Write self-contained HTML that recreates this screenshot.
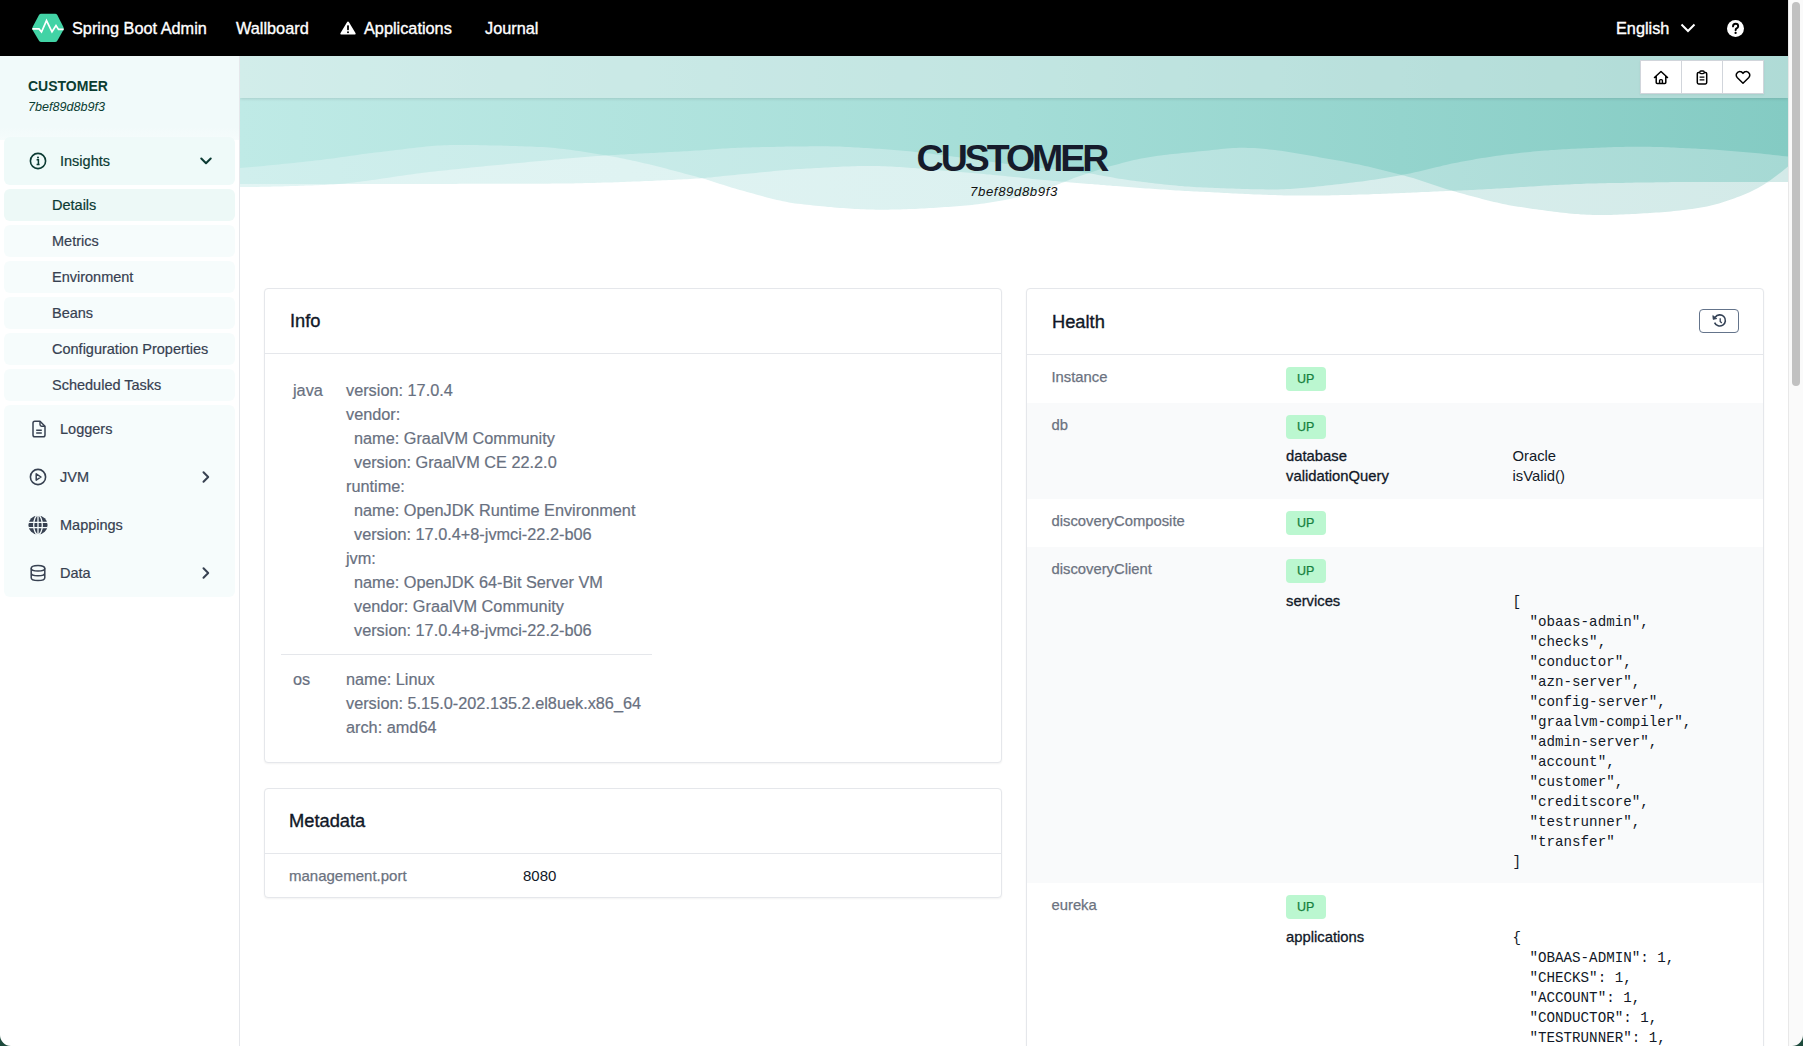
<!DOCTYPE html>
<html><head><meta charset="utf-8">
<style>
*{box-sizing:border-box;margin:0;padding:0}
html,body{width:1803px;height:1046px;overflow:hidden;background:#fff;font-family:"Liberation Sans",sans-serif;color:#111827}
.abs{position:absolute}
#nav{position:absolute;left:0;top:0;width:1788px;height:56px;background:#000;color:#fff}
#nav .t{position:absolute;top:0;line-height:56px;font-size:16.3px;white-space:nowrap;-webkit-text-stroke:0.35px #fff}
#side{position:absolute;left:0;top:56px;width:240px;height:990px;background:#fff;border-right:1px solid #e5e7eb}
#sidehead{position:absolute;left:0;top:0;width:239px;height:84px;background:linear-gradient(#f1fafa 85%,#f6fcfc)}
.sn{position:absolute;left:4px;width:231px;border-radius:6px;background:#f3fbfa;color:#374151;font-size:14.5px;white-space:nowrap}
#main{position:absolute;left:240px;top:56px;width:1548px;height:990px;overflow:hidden}
.card{position:absolute;background:#fff;border:1px solid #e5e7eb;border-radius:4px;box-shadow:0 1px 2px rgba(0,0,0,.05)}
.card h2{position:absolute;left:24px;font-size:18.5px;font-weight:normal;color:#111827;white-space:nowrap}
.hr{position:absolute;left:0;right:0;height:1px;background:#e5e7eb}
.tx{position:absolute;white-space:nowrap}
.g{color:#4b5563}
.mono{font-family:"Liberation Mono",monospace}
.badge{position:absolute;width:40px;height:24px;border-radius:4px;background:#bbf7d0;color:#15803d;font-size:12.5px;line-height:24px;text-align:center}
#scroll{position:absolute;left:1788px;top:0;width:15px;height:1046px;background:#fafafa;border-left:1px solid #e8e8e8}
#thumb{position:absolute;left:1792px;top:2px;width:8px;height:384px;border-radius:4px;background:#c1c1c1}
</style></head><body>

<div id="nav">
  <svg class="abs" style="left:32px;top:13px" width="32" height="30" viewBox="0 0 32 30">
    <path d="M9.2,0.8 H23.1 Q24.5,0.8 25.3,2 L31.4,14.1 Q32,15.5 31.4,16.9 L25.3,27.8 Q24.5,29 23.1,29 H9.2 Q7.8,29 7,27.8 L0.6,16.9 Q0,15.5 0.6,14.1 L7,2 Q7.8,0.8 9.2,0.8 Z" fill="#42d3a5"/>
    <polyline points="0.3,15.9 7,15.9 9.5,19 14.5,7.6 20,18.8 24,12.6 26.5,16.4 31.7,16.4" fill="none" stroke="#fff" stroke-width="1.7" stroke-linejoin="miter" stroke-miterlimit="3"/>
  </svg>
  <div class="t" style="left:72px">Spring Boot Admin</div>
  <div class="t" style="left:236px">Wallboard</div>
  <svg class="abs" style="left:340px;top:21px" width="16" height="14" viewBox="0 0 16 14"><path d="M8,0.5 Q8.6,0.5 9,1.2 L15.6,12.3 Q16,13.5 14.8,13.5 H1.2 Q0,13.5 0.4,12.3 L7,1.2 Q7.4,0.5 8,0.5 Z" fill="#fff"/><rect x="7.1" y="4.2" width="1.8" height="5" rx="0.6" fill="#000"/><circle cx="8" cy="11.2" r="1" fill="#000"/></svg>
  <div class="t" style="left:364px">Applications</div>
  <div class="t" style="left:485px">Journal</div>
  <div class="t" style="left:1616px">English</div>
  <svg class="abs" style="left:1680px;top:23px" width="16" height="10" viewBox="0 0 16 10"><polyline points="1.5,1.5 8,8 14.5,1.5" fill="none" stroke="#fff" stroke-width="2"/></svg>
  <svg class="abs" style="left:1727px;top:19.5px" width="17" height="17" viewBox="0 0 17 17"><circle cx="8.5" cy="8.5" r="8.5" fill="#fff"/><path d="M6,6.4 Q6,3.8 8.6,3.8 Q11.2,3.8 11.2,6.2 Q11.2,7.6 9.6,8.4 Q8.6,9 8.6,10.2" fill="none" stroke="#000" stroke-width="1.9" stroke-linecap="round"/><circle cx="8.6" cy="12.9" r="1.15" fill="#000"/></svg>
</div>

<div id="side">
  <div id="sidehead"></div>
  <div class="tx" style="left:28px;top:22px;font-size:14px;font-weight:bold;color:#0b3d32">CUSTOMER</div>
  <div class="tx" style="left:28px;top:44px;font-size:12.6px;font-style:italic;color:#0b3d32">7bef89d8b9f3</div>
  <div class="sn" style="top:81px;height:48px;background:#effaf9"></div>
  <svg class="abs" style="left:29px;top:96px" width="18" height="18" viewBox="0 0 18 18"><circle cx="9" cy="9" r="7.6" fill="none" stroke="#0b3a33" stroke-width="1.6"/><circle cx="9" cy="5.4" r="1" fill="#0b3a33"/><path d="M7.6,7.8 H9.4 V12.6 M7.6,12.6 H10.6" fill="none" stroke="#0b3a33" stroke-width="1.5"/></svg>
  <div class="tx" style="left:60px;top:96px;font-size:14.5px;line-height:18px;color:#0b3a33;-webkit-text-stroke:0.2px #0b3a33">Insights</div>
  <svg class="abs" style="left:200px;top:101px" width="12" height="8" viewBox="0 0 12 8"><polyline points="1.3,1.5 6,6.2 10.7,1.5" fill="none" stroke="#0b3a33" stroke-width="2" stroke-linecap="round" stroke-linejoin="round"/></svg>
  <div class="sn" style="top:133px;height:32px;background:#edf9f7"></div>
  <div class="tx" style="left:52px;top:140px;font-size:14.5px;line-height:18px;color:#0b3a33;-webkit-text-stroke:0.2px #0b3a33">Details</div>
  <div class="sn" style="top:169px;height:32px;background:#f6fcfc"></div>
  <div class="tx" style="left:52px;top:176px;font-size:14.5px;line-height:18px;color:#374151;-webkit-text-stroke:0.2px #374151">Metrics</div>
  <div class="sn" style="top:205px;height:32px;background:#f6fcfc"></div>
  <div class="tx" style="left:52px;top:212px;font-size:14.5px;line-height:18px;color:#374151;-webkit-text-stroke:0.2px #374151">Environment</div>
  <div class="sn" style="top:241px;height:32px;background:#f6fcfc"></div>
  <div class="tx" style="left:52px;top:248px;font-size:14.5px;line-height:18px;color:#374151;-webkit-text-stroke:0.2px #374151">Beans</div>
  <div class="sn" style="top:277px;height:32px;background:#f6fcfc"></div>
  <div class="tx" style="left:52px;top:284px;font-size:14.5px;line-height:18px;color:#374151;-webkit-text-stroke:0.2px #374151">Configuration Properties</div>
  <div class="sn" style="top:313px;height:32px;background:#f6fcfc"></div>
  <div class="tx" style="left:52px;top:320px;font-size:14.5px;line-height:18px;color:#374151;-webkit-text-stroke:0.2px #374151">Scheduled Tasks</div>
  <div class="sn" style="top:349px;height:192px;background:#f6fcfc"></div>
  <svg class="abs" style="left:30px;top:364px" width="18" height="18" viewBox="0 0 18 18"><path d="M3,3 Q3,1.2 4.8,1.2 H10 L15,6.2 V15 Q15,16.8 13.2,16.8 H4.8 Q3,16.8 3,15 Z" fill="none" stroke="#374151" stroke-width="1.5" stroke-linejoin="round"/><path d="M10,1.2 V4.6 Q10,6.2 11.6,6.2 H15" fill="none" stroke="#374151" stroke-width="1.4"/><path d="M6.2,10.2 H11.8 M6.2,13 H11.8" stroke="#374151" stroke-width="1.5"/></svg>
  <div class="tx" style="left:60px;top:364px;font-size:14.5px;line-height:18px;color:#374151;-webkit-text-stroke:0.2px #374151">Loggers</div>
  <svg class="abs" style="left:29px;top:412px" width="18" height="18" viewBox="0 0 18 18"><circle cx="9" cy="9" r="7.6" fill="none" stroke="#374151" stroke-width="1.6"/><path d="M7.2,5.8 L12,9 L7.2,12.2 Z" fill="none" stroke="#374151" stroke-width="1.5" stroke-linejoin="round"/></svg>
  <div class="tx" style="left:60px;top:412px;font-size:14.5px;line-height:18px;color:#374151;-webkit-text-stroke:0.2px #374151">JVM</div>
  <svg class="abs" style="left:200px;top:414px" width="12" height="14" viewBox="0 0 12 14"><polyline points="3.5,2.3 8.2,7 3.5,11.7" fill="none" stroke="#374151" stroke-width="2" stroke-linecap="round" stroke-linejoin="round"/></svg>
  <svg class="abs" style="left:28px;top:459px" width="20" height="20" viewBox="0 0 20 20"><circle cx="10" cy="10" r="9.6" fill="#374151"/><path d="M0.5,7.4 H19.5 M0.5,12.6 H19.5" stroke="#f6fcfc" stroke-width="1.3"/><path d="M10,0.4 V19.6" stroke="#f6fcfc" stroke-width="1.3"/><ellipse cx="10" cy="10" rx="4.3" ry="9.6" fill="none" stroke="#f6fcfc" stroke-width="1.3"/></svg>
  <div class="tx" style="left:60px;top:460px;font-size:14.5px;line-height:18px;color:#374151;-webkit-text-stroke:0.2px #374151">Mappings</div>
  <svg class="abs" style="left:29px;top:508px" width="18" height="18" viewBox="0 0 18 18"><ellipse cx="9" cy="4.2" rx="6.8" ry="2.8" fill="none" stroke="#374151" stroke-width="1.5"/><path d="M2.2,4.2 V13.8 Q2.2,16.6 9,16.6 Q15.8,16.6 15.8,13.8 V4.2 M2.2,9 Q2.2,11.8 9,11.8 Q15.8,11.8 15.8,9" fill="none" stroke="#374151" stroke-width="1.5"/></svg>
  <div class="tx" style="left:60px;top:508px;font-size:14.5px;line-height:18px;color:#374151;-webkit-text-stroke:0.2px #374151">Data</div>
  <svg class="abs" style="left:200px;top:510px" width="12" height="14" viewBox="0 0 12 14"><polyline points="3.5,2.3 8.2,7 3.5,11.7" fill="none" stroke="#374151" stroke-width="2" stroke-linecap="round" stroke-linejoin="round"/></svg>

</div>

<div id="main">
  <svg width="1548" height="184" viewBox="0 0 1548 184" style="position:absolute;left:0;top:0;display:block">
<defs>
<linearGradient id="gbg" x1="0" x2="1548" y1="0" y2="0" gradientUnits="userSpaceOnUse"><stop offset="0" stop-color="#bfeae6"/><stop offset="0.5" stop-color="#a4ddd7"/><stop offset="1" stop-color="#84cbc3"/></linearGradient>
<linearGradient id="gmd" x1="0" x2="1548" y1="0" y2="0" gradientUnits="userSpaceOnUse"><stop offset="0" stop-color="#d0efed"/><stop offset="0.5" stop-color="#c0e7e4"/><stop offset="1" stop-color="#a6d9d4"/></linearGradient>
<linearGradient id="glt" x1="0" x2="1548" y1="0" y2="0" gradientUnits="userSpaceOnUse"><stop offset="0" stop-color="#e2f5f4"/><stop offset="0.5" stop-color="#dcf1f0"/><stop offset="1" stop-color="#d3eae8"/></linearGradient>
</defs>
<path d="M0,0 H1548 V126 H0 Z" fill="url(#gbg)"/>
<path d="M0,184 L0,112.0 3,111.8 6,111.5 9,111.2 12,111.0 15,110.7 18,110.5 21,110.2 24,109.9 27,109.6 30,109.3 33,109.0 36,108.7 39,108.4 42,108.1 45,107.8 48,107.5 51,107.2 54,106.9 57,106.6 60,106.2 63,105.9 66,105.6 69,105.2 72,104.9 75,104.6 78,104.2 81,103.9 84,103.5 87,103.1 90,102.8 93,102.4 96,101.9 99,101.5 102,101.1 105,100.7 108,100.2 111,99.8 114,99.4 117,99.0 120,98.5 123,98.1 126,97.7 129,97.3 132,96.9 135,96.6 138,96.2 141,95.9 144,95.5 147,95.2 150,94.8 153,94.5 156,94.1 159,93.7 162,93.4 165,93.0 168,92.6 171,92.3 174,91.9 177,91.6 180,91.2 183,90.9 186,90.6 189,90.3 192,90.1 195,89.8 198,89.6 201,89.4 204,89.3 207,89.2 210,89.1 213,89.0 216,89.0 219,89.0 222,89.0 225,89.0 228,89.1 231,89.1 234,89.1 237,89.1 240,89.2 243,89.2 246,89.3 249,89.4 252,89.4 255,89.5 258,89.6 261,89.6 264,89.7 267,89.8 270,89.9 273,90.0 276,90.1 279,90.2 282,90.3 285,90.4 288,90.5 291,90.6 294,90.8 297,90.9 300,91.0 303,91.1 306,91.3 309,91.5 312,91.8 315,92.1 318,92.4 321,92.7 324,93.0 327,93.4 330,93.8 333,94.2 336,94.7 339,95.1 342,95.6 345,96.1 348,96.5 351,97.0 354,97.5 357,98.0 360,98.5 363,99.0 366,99.5 369,99.3 372,99.1 375,98.9 378,98.8 381,98.6 384,98.4 387,98.3 390,98.1 393,97.9 396,97.8 399,97.6 402,97.5 405,97.3 408,97.2 411,97.0 414,96.9 417,96.7 420,96.6 423,96.5 426,96.3 429,96.1 432,96.0 435,95.8 438,95.7 441,95.5 444,95.3 447,95.2 450,95.0 453,94.8 456,94.6 459,94.4 462,94.2 465,93.9 468,93.7 471,93.5 474,93.2 477,93.0 480,92.8 483,92.6 486,92.4 489,92.2 492,92.0 495,91.9 498,91.8 501,91.7 504,91.6 507,91.5 510,91.4 513,91.3 516,91.3 519,91.2 522,91.1 525,91.1 528,91.0 531,90.9 534,90.9 537,90.8 540,90.7 543,90.7 546,90.6 549,90.6 552,90.5 555,90.5 558,90.5 561,90.4 564,90.4 567,90.4 570,90.3 573,90.3 576,90.3 579,90.3 582,90.3 585,90.3 588,90.3 591,90.4 594,90.4 597,90.5 600,90.6 603,90.8 606,90.9 609,91.0 612,91.2 615,91.4 618,91.5 621,91.7 624,91.9 627,92.1 630,92.3 633,92.5 636,92.7 639,92.8 642,93.0 645,93.2 648,93.4 651,93.7 654,93.9 657,94.2 660,94.4 663,94.7 666,95.0 669,95.3 672,95.6 675,95.9 678,96.2 681,96.6 684,96.9 687,97.3 690,97.6 693,98.0 696,98.4 699,98.8 702,99.1 705,99.5 708,99.9 711,100.3 714,100.7 717,101.1 720,101.5 723,102.0 726,102.4 729,102.8 732,103.2 735,103.6 738,104.0 741,104.5 744,104.9 747,105.3 750,105.7 753,106.1 756,106.5 759,106.9 762,107.3 765,107.7 768,108.1 771,108.5 774,108.9 777,109.3 780,109.7 783,110.0 786,110.4 789,110.8 792,111.1 795,111.5 798,111.8 801,112.1 804,112.4 807,112.7 810,113.0 813,113.3 816,113.5 819,113.8 822,114.1 825,114.4 828,114.7 831,115.0 834,115.3 837,115.6 840,116.0 843,116.4 846,116.8 849,116.9 852,115.9 855,114.9 858,113.9 861,113.0 864,112.0 867,111.1 870,110.3 873,109.5 876,108.7 879,107.9 882,107.1 885,106.3 888,105.5 891,104.8 894,104.1 897,103.4 900,102.8 903,102.2 906,101.7 909,101.2 912,100.7 915,100.3 918,99.8 921,99.4 924,99.1 927,98.7 930,98.3 933,98.0 936,97.7 939,97.4 942,97.0 945,96.7 948,96.5 951,96.2 954,95.9 957,95.6 960,95.3 963,95.0 966,94.7 969,94.4 972,94.0 975,93.7 978,93.4 981,93.0 984,92.8 987,92.5 990,92.3 993,92.1 996,91.9 999,91.8 1002,91.8 1005,91.8 1008,91.9 1011,92.0 1014,92.1 1017,92.3 1020,92.5 1023,92.8 1026,93.0 1029,93.4 1032,93.7 1035,94.1 1038,94.4 1041,94.8 1044,95.3 1047,95.7 1050,96.2 1053,96.7 1056,97.2 1059,97.7 1062,98.2 1065,98.7 1068,99.2 1071,99.8 1074,100.3 1077,100.8 1080,101.4 1083,101.9 1086,102.4 1089,103.0 1092,103.5 1095,104.0 1098,104.5 1101,105.0 1104,105.6 1107,106.2 1110,106.8 1113,107.4 1116,108.0 1119,108.6 1122,109.3 1125,109.9 1128,110.6 1131,111.3 1134,112.0 1137,112.7 1140,113.4 1143,114.2 1146,114.9 1149,115.7 1152,116.4 1155,117.2 1158,118.0 1161,118.7 1164,118.6 1167,118.0 1170,117.4 1173,116.8 1176,116.1 1179,115.4 1182,114.7 1185,114.0 1188,113.3 1191,112.5 1194,111.8 1197,111.1 1200,110.4 1203,109.6 1206,108.9 1209,108.3 1212,107.6 1215,107.0 1218,106.4 1221,105.8 1224,105.3 1227,104.7 1230,104.2 1233,103.7 1236,103.1 1239,102.6 1242,102.1 1245,101.7 1248,101.2 1251,100.7 1254,100.3 1257,99.8 1260,99.4 1263,99.0 1266,98.6 1269,98.3 1272,97.9 1275,97.5 1278,97.2 1281,96.8 1284,96.5 1287,96.2 1290,95.9 1293,95.6 1296,95.3 1299,95.1 1302,94.8 1305,94.6 1308,94.4 1311,94.1 1314,93.9 1317,93.7 1320,93.5 1323,93.3 1326,93.2 1329,93.0 1332,92.8 1335,92.7 1338,92.6 1341,92.4 1344,92.3 1347,92.2 1350,92.0 1353,91.9 1356,91.8 1359,91.7 1362,91.5 1365,91.4 1368,91.3 1371,91.2 1374,91.1 1377,91.0 1380,91.0 1383,90.9 1386,90.8 1389,90.8 1392,90.7 1395,90.7 1398,90.7 1401,90.7 1404,90.7 1407,90.7 1410,90.8 1413,90.9 1416,90.9 1419,91.0 1422,91.1 1425,91.2 1428,91.3 1431,91.5 1434,91.6 1437,91.7 1440,91.9 1443,92.0 1446,92.2 1449,92.3 1452,92.5 1455,92.6 1458,92.8 1461,93.0 1464,93.1 1467,93.3 1470,93.5 1473,93.6 1476,93.8 1479,94.0 1482,94.2 1485,94.5 1488,94.7 1491,94.9 1494,95.2 1497,95.4 1500,95.7 1503,95.9 1506,96.2 1509,96.5 1512,96.7 1515,97.0 1518,97.3 1521,97.6 1524,97.9 1527,98.3 1530,98.6 1533,98.9 1536,99.2 1539,99.6 1542,99.9 1545,100.2 1548,100.6 L1548,184 Z" fill="url(#gmd)"/>
<path d="M0,184 L0,128.0 3,128.0 6,128.0 9,128.0 12,128.0 15,128.0 18,128.0 21,128.0 24,128.0 27,128.0 30,128.0 33,128.0 36,128.0 39,128.0 42,128.0 45,128.0 48,128.0 51,128.0 54,128.0 57,128.0 60,128.0 63,128.0 66,128.0 69,128.0 72,128.0 75,128.0 78,128.0 81,128.0 84,128.0 87,128.0 90,128.0 93,128.0 96,128.0 99,128.0 102,127.7 105,127.4 108,127.1 111,126.8 114,126.4 117,126.1 120,125.7 123,125.3 126,124.9 129,124.5 132,124.1 135,123.7 138,123.2 141,122.8 144,122.3 147,121.9 150,121.4 153,121.0 156,120.6 159,120.1 162,119.7 165,119.2 168,118.8 171,118.4 174,118.0 177,117.6 180,117.2 183,116.8 186,116.5 189,116.1 192,115.8 195,115.5 198,115.1 201,114.8 204,114.5 207,114.2 210,113.8 213,113.5 216,113.2 219,112.9 222,112.6 225,112.3 228,112.0 231,111.6 234,111.3 237,111.0 240,110.7 243,110.4 246,110.1 249,109.8 252,109.5 255,109.2 258,108.9 261,108.7 264,108.4 267,108.1 270,107.8 273,107.5 276,107.2 279,106.9 282,106.7 285,106.4 288,106.1 291,105.8 294,105.5 297,105.3 300,105.0 303,104.7 306,104.5 309,104.2 312,103.9 315,103.6 318,103.4 321,103.1 324,102.8 327,102.6 330,102.3 333,102.0 336,101.8 339,101.5 342,101.3 345,101.0 348,100.8 351,100.6 354,100.3 357,100.1 360,99.9 363,99.7 366,99.5 369,100.0 372,100.5 375,101.1 378,101.6 381,102.2 384,102.8 387,103.4 390,104.0 393,104.7 396,105.3 399,106.0 402,106.7 405,107.4 408,108.1 411,108.8 414,109.6 417,110.3 420,111.1 423,111.8 426,112.6 429,113.4 432,114.2 435,115.0 438,115.8 441,116.6 444,117.4 447,118.2 450,119.0 453,119.8 456,120.6 459,121.5 462,122.2 465,121.9 468,121.6 471,121.4 474,121.1 477,120.7 480,120.4 483,120.1 486,119.8 489,119.5 492,119.2 495,118.9 498,118.6 501,118.3 504,118.0 507,117.7 510,117.4 513,117.2 516,116.9 519,116.6 522,116.3 525,116.0 528,115.7 531,115.4 534,115.1 537,114.8 540,114.5 543,114.3 546,114.0 549,113.8 552,113.5 555,113.3 558,113.1 561,112.9 564,112.8 567,112.6 570,112.4 573,112.2 576,112.0 579,111.9 582,111.7 585,111.5 588,111.4 591,111.2 594,111.0 597,110.9 600,110.8 603,110.6 606,110.5 609,110.4 612,110.3 615,110.2 618,110.1 621,110.1 624,110.0 627,110.0 630,110.0 633,110.0 636,110.0 639,110.1 642,110.2 645,110.3 648,110.4 651,110.5 654,110.7 657,110.9 660,111.0 663,111.2 666,111.4 669,111.7 672,111.9 675,112.1 678,112.4 681,112.6 684,112.9 687,113.1 690,113.4 693,113.7 696,113.9 699,114.2 702,114.5 705,114.7 708,115.0 711,115.3 714,115.5 717,115.8 720,116.0 723,116.2 726,116.5 729,116.7 732,117.0 735,117.3 738,117.5 741,117.8 744,118.1 747,118.4 750,118.6 753,118.9 756,119.2 759,119.5 762,119.8 765,120.1 768,120.4 771,120.7 774,121.0 777,121.3 780,121.6 783,122.0 786,122.3 789,122.6 792,122.9 795,123.2 798,123.5 801,123.7 804,124.0 807,124.3 810,124.6 813,124.9 816,125.1 819,125.4 822,125.7 825,125.6 828,124.4 831,123.3 834,122.1 837,121.0 840,120.0 843,119.0 846,118.0 849,117.3 852,117.8 855,118.3 858,118.9 861,119.4 864,120.0 867,120.5 870,121.1 873,121.6 876,122.2 879,122.7 882,123.1 885,123.6 888,124.0 891,124.4 894,124.8 897,125.2 900,125.5 903,125.9 906,126.3 909,126.7 912,127.0 915,127.4 918,127.7 921,128.1 924,128.4 927,128.7 930,129.0 933,129.3 936,129.6 939,129.9 942,130.1 945,130.4 948,130.6 951,130.8 954,131.0 957,131.2 960,131.3 963,131.4 966,131.6 969,131.7 972,131.8 975,132.0 978,132.1 981,132.2 984,132.3 987,132.4 990,132.5 993,132.6 996,132.7 999,132.8 1002,132.9 1005,133.0 1008,133.1 1011,133.2 1014,133.2 1017,133.3 1020,133.3 1023,133.3 1026,133.4 1029,133.4 1032,133.4 1035,133.4 1038,133.4 1041,133.3 1044,133.2 1047,133.1 1050,132.9 1053,132.7 1056,132.5 1059,132.3 1062,132.1 1065,131.8 1068,131.5 1071,131.2 1074,130.9 1077,130.6 1080,130.3 1083,130.0 1086,129.6 1089,129.3 1092,128.9 1095,128.6 1098,128.2 1101,127.9 1104,127.5 1107,127.2 1110,126.8 1113,126.5 1116,126.1 1119,125.7 1122,125.4 1125,125.0 1128,124.5 1131,124.1 1134,123.7 1137,123.2 1140,122.7 1143,122.3 1146,121.8 1149,121.3 1152,120.8 1155,120.2 1158,119.7 1161,119.2 1164,119.5 1167,120.4 1170,121.2 1173,122.1 1176,123.1 1179,124.0 1182,125.0 1185,126.0 1188,127.0 1191,128.0 1194,129.0 1197,130.0 1200,130.9 1203,131.9 1206,132.9 1209,133.8 1212,134.7 1215,134.7 1218,134.6 1221,134.5 1224,134.3 1227,134.2 1230,134.1 1233,133.9 1236,133.8 1239,133.6 1242,133.5 1245,133.3 1248,133.1 1251,133.0 1254,132.8 1257,132.6 1260,132.4 1263,132.2 1266,132.1 1269,131.9 1272,131.7 1275,131.5 1278,131.3 1281,131.1 1284,130.9 1287,130.7 1290,130.5 1293,130.4 1296,130.2 1299,130.0 1302,129.8 1305,129.6 1308,129.5 1311,129.3 1314,129.1 1317,129.0 1320,128.8 1323,128.7 1326,128.5 1329,128.4 1332,128.2 1335,128.1 1338,128.0 1341,127.9 1344,127.7 1347,127.6 1350,127.6 1353,127.5 1356,127.4 1359,127.3 1362,127.3 1365,127.2 1368,127.1 1371,127.1 1374,127.0 1377,127.0 1380,126.9 1383,126.9 1386,126.8 1389,126.7 1392,126.7 1395,126.6 1398,126.6 1401,126.5 1404,126.5 1407,126.4 1410,126.4 1413,126.4 1416,126.3 1419,126.3 1422,126.2 1425,126.2 1428,126.2 1431,126.1 1434,126.1 1437,126.1 1440,126.1 1443,126.1 1446,126.0 1449,126.0 1452,126.0 1455,126.0 1458,126.0 1461,126.0 1464,126.0 1467,126.0 1470,126.0 1473,126.0 1476,126.0 1479,126.0 1482,126.0 1485,126.0 1488,126.0 1491,126.0 1494,126.0 1497,126.0 1500,126.0 1503,126.0 1506,126.0 1509,126.0 1512,126.0 1515,126.0 1518,126.0 1521,126.0 1524,126.0 1527,126.0 1530,124.4 1533,122.3 1536,120.1 1539,117.8 1542,115.4 1545,113.0 1548,110.6 L1548,184 Z" fill="url(#glt)"/>
<path d="M0,184 L0,131.0 3,131.0 6,131.0 9,131.0 12,130.9 15,130.9 18,130.9 21,130.8 24,130.8 27,130.7 30,130.7 33,130.6 36,130.5 39,130.5 42,130.4 45,130.3 48,130.2 51,130.1 54,130.0 57,129.9 60,129.8 63,129.7 66,129.6 69,129.5 72,129.4 75,129.3 78,129.2 81,129.1 84,129.0 87,128.8 90,128.6 93,128.5 96,128.2 99,128.0 102,128.0 105,128.0 108,128.0 111,128.0 114,128.0 117,128.0 120,128.0 123,128.0 126,128.0 129,127.9 132,127.9 135,127.9 138,127.9 141,127.9 144,127.9 147,127.9 150,127.9 153,127.9 156,127.9 159,127.9 162,127.9 165,127.9 168,127.9 171,127.9 174,127.9 177,127.9 180,127.9 183,127.9 186,127.9 189,127.9 192,127.9 195,127.9 198,127.9 201,127.9 204,127.9 207,127.9 210,127.9 213,127.9 216,127.9 219,127.8 222,127.8 225,127.8 228,127.8 231,127.8 234,127.8 237,127.8 240,127.8 243,127.8 246,127.8 249,127.8 252,127.8 255,127.8 258,127.8 261,127.8 264,127.8 267,127.8 270,127.8 273,127.8 276,127.7 279,127.7 282,127.7 285,127.7 288,127.7 291,127.7 294,127.7 297,127.7 300,127.7 303,127.7 306,127.7 309,127.7 312,127.6 315,127.6 318,127.6 321,127.5 324,127.5 327,127.5 330,127.4 333,127.4 336,127.3 339,127.2 342,127.2 345,127.1 348,127.0 351,127.0 354,126.9 357,126.8 360,126.7 363,126.6 366,126.6 369,126.5 372,126.4 375,126.3 378,126.2 381,126.1 384,125.9 387,125.8 390,125.7 393,125.6 396,125.5 399,125.4 402,125.2 405,125.1 408,125.0 411,124.9 414,124.7 417,124.6 420,124.5 423,124.3 426,124.2 429,124.0 432,123.9 435,123.7 438,123.6 441,123.5 444,123.3 447,123.2 450,123.0 453,122.8 456,122.6 459,122.4 462,122.3 465,123.1 468,124.0 471,125.0 474,125.9 477,126.9 480,127.9 483,128.8 486,129.8 489,130.8 492,131.7 495,132.6 498,133.5 501,134.3 504,135.1 507,135.9 510,136.7 513,137.6 516,138.4 519,139.2 522,140.1 525,140.9 528,141.7 531,142.4 534,143.2 537,143.9 540,144.6 543,145.2 546,145.8 549,146.4 552,146.9 555,147.4 558,147.8 561,148.1 564,148.4 567,148.8 570,149.1 573,149.4 576,149.7 579,150.0 582,150.3 585,150.6 588,150.9 591,151.1 594,151.4 597,151.7 600,151.9 603,152.1 606,152.3 609,152.5 612,152.7 615,152.9 618,153.1 621,153.2 624,153.3 627,153.4 630,153.5 633,153.6 636,153.7 639,153.7 642,153.7 645,153.7 648,153.7 651,153.6 654,153.6 657,153.5 660,153.4 663,153.3 666,153.2 669,153.1 672,153.0 675,152.9 678,152.7 681,152.6 684,152.4 687,152.2 690,152.1 693,151.9 696,151.7 699,151.5 702,151.3 705,151.1 708,150.9 711,150.7 714,150.4 717,150.2 720,150.0 723,149.8 726,149.5 729,149.2 732,148.9 735,148.5 738,148.2 741,147.8 744,147.4 747,146.9 750,146.5 753,146.0 756,145.5 759,145.0 762,144.4 765,143.9 768,143.3 771,142.7 774,142.1 777,141.5 780,140.9 783,140.2 786,139.5 789,138.8 792,137.9 795,137.0 798,136.0 801,135.0 804,133.9 807,132.8 810,131.6 813,130.4 816,129.2 819,128.0 822,126.8 825,125.9 828,126.2 831,126.4 834,126.7 837,126.9 840,127.2 843,127.4 846,127.7 849,127.9 852,128.1 855,128.4 858,128.6 861,128.9 864,129.1 867,129.4 870,129.6 873,129.9 876,130.1 879,130.3 882,130.6 885,130.8 888,131.0 891,131.3 894,131.5 897,131.7 900,131.9 903,132.2 906,132.4 909,132.6 912,132.8 915,133.0 918,133.2 921,133.4 924,133.6 927,133.8 930,134.0 933,134.2 936,134.4 939,134.6 942,134.7 945,134.9 948,135.1 951,135.2 954,135.4 957,135.6 960,135.7 963,135.8 966,136.0 969,136.1 972,136.3 975,136.5 978,136.6 981,136.8 984,136.9 987,137.1 990,137.2 993,137.4 996,137.5 999,137.7 1002,137.8 1005,138.0 1008,138.1 1011,138.2 1014,138.4 1017,138.5 1020,138.6 1023,138.7 1026,138.8 1029,139.0 1032,139.1 1035,139.1 1038,139.2 1041,139.3 1044,139.4 1047,139.4 1050,139.5 1053,139.5 1056,139.6 1059,139.6 1062,139.6 1065,139.6 1068,139.6 1071,139.6 1074,139.6 1077,139.5 1080,139.5 1083,139.5 1086,139.4 1089,139.4 1092,139.3 1095,139.3 1098,139.2 1101,139.1 1104,139.1 1107,139.0 1110,138.9 1113,138.8 1116,138.7 1119,138.6 1122,138.6 1125,138.5 1128,138.4 1131,138.2 1134,138.1 1137,138.0 1140,137.9 1143,137.8 1146,137.7 1149,137.6 1152,137.4 1155,137.3 1158,137.2 1161,137.1 1164,136.9 1167,136.8 1170,136.7 1173,136.5 1176,136.4 1179,136.3 1182,136.1 1185,136.0 1188,135.9 1191,135.7 1194,135.6 1197,135.5 1200,135.3 1203,135.2 1206,135.1 1209,135.0 1212,134.8 1215,135.6 1218,136.5 1221,137.3 1224,138.1 1227,138.9 1230,139.7 1233,140.5 1236,141.3 1239,142.1 1242,142.9 1245,143.7 1248,144.4 1251,145.2 1254,145.9 1257,146.6 1260,147.3 1263,147.9 1266,148.6 1269,149.2 1272,149.7 1275,150.2 1278,150.7 1281,151.1 1284,151.6 1287,152.0 1290,152.4 1293,152.9 1296,153.3 1299,153.7 1302,154.1 1305,154.5 1308,154.9 1311,155.3 1314,155.7 1317,156.1 1320,156.4 1323,156.8 1326,157.1 1329,157.4 1332,157.7 1335,157.9 1338,158.1 1341,158.4 1344,158.5 1347,158.7 1350,158.8 1353,158.9 1356,159.0 1359,159.0 1362,159.0 1365,159.0 1368,158.9 1371,158.9 1374,158.8 1377,158.7 1380,158.6 1383,158.5 1386,158.3 1389,158.2 1392,158.0 1395,157.9 1398,157.7 1401,157.5 1404,157.3 1407,157.2 1410,157.0 1413,156.8 1416,156.6 1419,156.4 1422,156.2 1425,155.9 1428,155.7 1431,155.4 1434,155.1 1437,154.8 1440,154.4 1443,154.1 1446,153.7 1449,153.3 1452,152.9 1455,152.5 1458,152.0 1461,151.5 1464,151.0 1467,150.4 1470,149.7 1473,149.0 1476,148.2 1479,147.4 1482,146.5 1485,145.6 1488,144.6 1491,143.5 1494,142.5 1497,141.3 1500,140.2 1503,139.0 1506,137.7 1509,136.4 1512,135.1 1515,133.6 1518,132.0 1521,130.3 1524,128.4 1527,126.5 1530,126.0 1533,126.0 1536,126.0 1539,126.0 1542,126.0 1545,126.0 1548,126.0 L1548,184 Z" fill="#fff"/>
</svg>
  <div class="abs" style="left:0;top:0;width:1548px;height:42px;background:rgba(235,240,240,0.42);box-shadow:0 1px 3px rgba(0,0,0,.12)"></div>
  <div class="abs" style="left:1400px;top:4px;width:124px;height:34px;background:#fff;border:1px solid #d1d5db;box-shadow:0 1px 2px rgba(0,0,0,.06)"></div>
  <div class="abs" style="left:1441px;top:4px;width:1px;height:34px;background:#d1d5db"></div>
  <div class="abs" style="left:1482px;top:4px;width:1px;height:34px;background:#d1d5db"></div>
  <svg class="abs" style="left:1413px;top:14px" width="16" height="15" viewBox="0 0 16 15"><path d="M1.5,7.5 L8,1.5 L14.5,7.5 M3.2,6 V12.6 Q3.2,13.6 4.2,13.6 H11.8 Q12.8,13.6 12.8,12.6 V6" fill="none" stroke="#000" stroke-width="1.5" stroke-linejoin="round" stroke-linecap="round"/><path d="M6.6,13.6 V10.6 Q6.6,9.6 7.6,9.6 H8.4 Q9.4,9.6 9.4,10.6 V13.6" fill="none" stroke="#000" stroke-width="1.4"/></svg>
  <svg class="abs" style="left:1455px;top:14px" width="14" height="15" viewBox="0 0 14 15"><rect x="2.3" y="2.5" width="9.4" height="11.4" rx="1.3" fill="none" stroke="#000" stroke-width="1.5"/><rect x="4.8" y="1" width="4.4" height="2.6" rx="1.1" fill="#fff" stroke="#000" stroke-width="1.3"/><path d="M4.6,7.2 H9.4 M4.6,9.8 H9.4" stroke="#000" stroke-width="1.3"/></svg>
  <svg class="abs" style="left:1495px;top:14px" width="16" height="15" viewBox="0 0 16 15"><path d="M8,13.2 L2.4,7.8 Q0.6,5.8 1.6,3.6 Q2.8,1.3 5.1,1.5 Q6.8,1.6 8,3.4 Q9.2,1.6 10.9,1.5 Q13.2,1.3 14.4,3.6 Q15.4,5.8 13.6,7.8 Z" fill="none" stroke="#000" stroke-width="1.5" stroke-linejoin="round"/></svg>
  <div class="tx" style="left:0;width:1548px;text-align:center;top:82px;font-size:37.5px;line-height:40px;font-weight:bold;color:#161b2b;letter-spacing:-3px;text-indent:-5px">CUSTOMER</div>
  <div class="tx" style="left:0;width:1548px;text-align:center;top:128px;font-size:13.2px;line-height:16px;font-style:italic;color:#111;letter-spacing:0.6px">7bef89d8b9f3</div>

</div>
<div class="card" style="left:264px;top:288px;width:738px;height:475px"></div>
<div class="hr" style="left:265px;width:736px;top:353px"></div>
<div class="tx" style="left:290px;top:311.51px;font-size:18.3px;line-height:18.3px;color:#111827;-webkit-text-stroke:0.35px #111827;">Info</div>
<div class="tx" style="left:293px;top:381.60px;font-size:16.3px;line-height:16.3px;color:#687080;-webkit-text-stroke:0.2px #687080;">java</div>
<div class="tx" style="left:346px;top:381.60px;font-size:16.3px;line-height:16.3px;color:#687080;-webkit-text-stroke:0.2px #687080;">version: 17.0.4</div>
<div class="tx" style="left:346px;top:405.60px;font-size:16.3px;line-height:16.3px;color:#687080;-webkit-text-stroke:0.2px #687080;">vendor:</div>
<div class="tx" style="left:354px;top:429.60px;font-size:16.3px;line-height:16.3px;color:#687080;-webkit-text-stroke:0.2px #687080;">name: GraalVM Community</div>
<div class="tx" style="left:354px;top:453.60px;font-size:16.3px;line-height:16.3px;color:#687080;-webkit-text-stroke:0.2px #687080;">version: GraalVM CE 22.2.0</div>
<div class="tx" style="left:346px;top:477.60px;font-size:16.3px;line-height:16.3px;color:#687080;-webkit-text-stroke:0.2px #687080;">runtime:</div>
<div class="tx" style="left:354px;top:501.60px;font-size:16.3px;line-height:16.3px;color:#687080;-webkit-text-stroke:0.2px #687080;">name: OpenJDK Runtime Environment</div>
<div class="tx" style="left:354px;top:525.60px;font-size:16.3px;line-height:16.3px;color:#687080;-webkit-text-stroke:0.2px #687080;">version: 17.0.4+8-jvmci-22.2-b06</div>
<div class="tx" style="left:346px;top:549.60px;font-size:16.3px;line-height:16.3px;color:#687080;-webkit-text-stroke:0.2px #687080;">jvm:</div>
<div class="tx" style="left:354px;top:573.60px;font-size:16.3px;line-height:16.3px;color:#687080;-webkit-text-stroke:0.2px #687080;">name: OpenJDK 64-Bit Server VM</div>
<div class="tx" style="left:354px;top:597.60px;font-size:16.3px;line-height:16.3px;color:#687080;-webkit-text-stroke:0.2px #687080;">vendor: GraalVM Community</div>
<div class="tx" style="left:354px;top:621.60px;font-size:16.3px;line-height:16.3px;color:#687080;-webkit-text-stroke:0.2px #687080;">version: 17.0.4+8-jvmci-22.2-b06</div>
<div class="hr" style="left:281px;width:371px;top:654px"></div>
<div class="tx" style="left:293px;top:670.80px;font-size:16.3px;line-height:16.3px;color:#687080;-webkit-text-stroke:0.2px #687080;">os</div>
<div class="tx" style="left:346px;top:670.80px;font-size:16.3px;line-height:16.3px;color:#687080;-webkit-text-stroke:0.2px #687080;">name: Linux</div>
<div class="tx" style="left:346px;top:694.80px;font-size:16.3px;line-height:16.3px;color:#687080;-webkit-text-stroke:0.2px #687080;">version: 5.15.0-202.135.2.el8uek.x86_64</div>
<div class="tx" style="left:346px;top:718.80px;font-size:16.3px;line-height:16.3px;color:#687080;-webkit-text-stroke:0.2px #687080;">arch: amd64</div>
<div class="card" style="left:264px;top:788px;width:738px;height:110px"></div>
<div class="hr" style="left:265px;width:736px;top:853px"></div>
<div class="tx" style="left:289px;top:811.51px;font-size:18.3px;line-height:18.3px;color:#111827;-webkit-text-stroke:0.35px #111827;">Metadata</div>
<div class="tx" style="left:289px;top:868.30px;font-size:15px;line-height:15px;color:#6b7280;-webkit-text-stroke:0.25px #6b7280;">management.port</div>
<div class="tx" style="left:523px;top:868.30px;font-size:15px;line-height:15px;color:#111827;">8080</div>
<div class="card" style="left:1026px;top:288px;width:738px;height:800px"></div>
<div class="hr" style="left:1027px;width:736px;top:354px"></div>
<div class="tx" style="left:1052px;top:312.51px;font-size:18.3px;line-height:18.3px;color:#111827;-webkit-text-stroke:0.35px #111827;">Health</div>
<div class="abs" style="left:1699px;top:309px;width:40px;height:24px;border:1px solid #64748b;border-radius:4px;background:#fff"></div>
<svg class="abs" style="left:1710px;top:313px" width="18" height="16" viewBox="0 0 18 16"><path d="M4.6,9.6 A5.6,5.6 0 1 0 5.2,4.2" fill="none" stroke="#334155" stroke-width="1.6"/><path d="M2.8,2.6 L3.2,6.4 L6.8,5.6 Z" fill="#334155" stroke="#334155" stroke-width="0.8" stroke-linejoin="round"/><path d="M10.2,5.2 V8.4 L11.8,10" fill="none" stroke="#334155" stroke-width="1.3"/></svg>
<div class="abs" style="left:1027px;top:403px;width:736px;height:96px;background:#f9fafb"></div>
<div class="abs" style="left:1027px;top:547px;width:736px;height:336px;background:#f9fafb"></div>
<div class="tx" style="left:1051.5px;top:369.97px;font-size:14.8px;line-height:14.8px;color:#6b7280;-webkit-text-stroke:0.25px #6b7280;">Instance</div>
<div class="badge" style="left:1286px;top:367px;height:24px"></div><div class="tx" style="left:1297px;top:372.72px;font-size:12.5px;line-height:12.5px;color:#15803d;-webkit-text-stroke:0.25px #15803d;">UP</div>
<div class="tx" style="left:1051.5px;top:417.97px;font-size:14.8px;line-height:14.8px;color:#6b7280;-webkit-text-stroke:0.25px #6b7280;">db</div>
<div class="badge" style="left:1286px;top:415px;height:24px"></div><div class="tx" style="left:1297px;top:420.72px;font-size:12.5px;line-height:12.5px;color:#15803d;-webkit-text-stroke:0.25px #15803d;">UP</div>
<div class="tx" style="left:1051.5px;top:513.97px;font-size:14.8px;line-height:14.8px;color:#6b7280;-webkit-text-stroke:0.25px #6b7280;">discoveryComposite</div>
<div class="badge" style="left:1286px;top:511px;height:24px"></div><div class="tx" style="left:1297px;top:516.72px;font-size:12.5px;line-height:12.5px;color:#15803d;-webkit-text-stroke:0.25px #15803d;">UP</div>
<div class="tx" style="left:1051.5px;top:561.97px;font-size:14.8px;line-height:14.8px;color:#6b7280;-webkit-text-stroke:0.25px #6b7280;">discoveryClient</div>
<div class="badge" style="left:1286px;top:559px;height:24px"></div><div class="tx" style="left:1297px;top:564.72px;font-size:12.5px;line-height:12.5px;color:#15803d;-webkit-text-stroke:0.25px #15803d;">UP</div>
<div class="tx" style="left:1051.5px;top:897.97px;font-size:14.8px;line-height:14.8px;color:#6b7280;-webkit-text-stroke:0.25px #6b7280;">eureka</div>
<div class="badge" style="left:1286px;top:895px;height:24px"></div><div class="tx" style="left:1297px;top:900.72px;font-size:12.5px;line-height:12.5px;color:#15803d;-webkit-text-stroke:0.25px #15803d;">UP</div>
<div class="tx" style="left:1286px;top:449.17px;font-size:14.8px;line-height:14.8px;color:#111827;-webkit-text-stroke:0.3px #111827;">database</div>
<div class="tx" style="left:1512.5px;top:449.17px;font-size:14.8px;line-height:14.8px;color:#111827;">Oracle</div>
<div class="tx" style="left:1286px;top:469.37px;font-size:14.8px;line-height:14.8px;color:#111827;-webkit-text-stroke:0.3px #111827;">validationQuery</div>
<div class="tx" style="left:1512.5px;top:469.37px;font-size:14.8px;line-height:14.8px;color:#111827;">isValid()</div>
<div class="tx" style="left:1286px;top:593.97px;font-size:14.8px;line-height:14.8px;color:#111827;-webkit-text-stroke:0.3px #111827;">services</div>
<div class="tx" style="left:1512.5px;top:594.82px;font-size:14.2px;line-height:14.2px;color:#111827;font-family:'Liberation Mono',monospace;">[</div>
<div class="tx" style="left:1512.5px;top:614.82px;font-size:14.2px;line-height:14.2px;color:#111827;font-family:'Liberation Mono',monospace;">&nbsp;&nbsp;"obaas-admin",</div>
<div class="tx" style="left:1512.5px;top:634.82px;font-size:14.2px;line-height:14.2px;color:#111827;font-family:'Liberation Mono',monospace;">&nbsp;&nbsp;"checks",</div>
<div class="tx" style="left:1512.5px;top:654.82px;font-size:14.2px;line-height:14.2px;color:#111827;font-family:'Liberation Mono',monospace;">&nbsp;&nbsp;"conductor",</div>
<div class="tx" style="left:1512.5px;top:674.82px;font-size:14.2px;line-height:14.2px;color:#111827;font-family:'Liberation Mono',monospace;">&nbsp;&nbsp;"azn-server",</div>
<div class="tx" style="left:1512.5px;top:694.82px;font-size:14.2px;line-height:14.2px;color:#111827;font-family:'Liberation Mono',monospace;">&nbsp;&nbsp;"config-server",</div>
<div class="tx" style="left:1512.5px;top:714.82px;font-size:14.2px;line-height:14.2px;color:#111827;font-family:'Liberation Mono',monospace;">&nbsp;&nbsp;"graalvm-compiler",</div>
<div class="tx" style="left:1512.5px;top:734.82px;font-size:14.2px;line-height:14.2px;color:#111827;font-family:'Liberation Mono',monospace;">&nbsp;&nbsp;"admin-server",</div>
<div class="tx" style="left:1512.5px;top:754.82px;font-size:14.2px;line-height:14.2px;color:#111827;font-family:'Liberation Mono',monospace;">&nbsp;&nbsp;"account",</div>
<div class="tx" style="left:1512.5px;top:774.82px;font-size:14.2px;line-height:14.2px;color:#111827;font-family:'Liberation Mono',monospace;">&nbsp;&nbsp;"customer",</div>
<div class="tx" style="left:1512.5px;top:794.82px;font-size:14.2px;line-height:14.2px;color:#111827;font-family:'Liberation Mono',monospace;">&nbsp;&nbsp;"creditscore",</div>
<div class="tx" style="left:1512.5px;top:814.82px;font-size:14.2px;line-height:14.2px;color:#111827;font-family:'Liberation Mono',monospace;">&nbsp;&nbsp;"testrunner",</div>
<div class="tx" style="left:1512.5px;top:834.82px;font-size:14.2px;line-height:14.2px;color:#111827;font-family:'Liberation Mono',monospace;">&nbsp;&nbsp;"transfer"</div>
<div class="tx" style="left:1512.5px;top:854.82px;font-size:14.2px;line-height:14.2px;color:#111827;font-family:'Liberation Mono',monospace;">]</div>
<div class="tx" style="left:1286px;top:930.07px;font-size:14.8px;line-height:14.8px;color:#111827;-webkit-text-stroke:0.3px #111827;">applications</div>
<div class="tx" style="left:1512.5px;top:930.92px;font-size:14.2px;line-height:14.2px;color:#111827;font-family:'Liberation Mono',monospace;">{</div>
<div class="tx" style="left:1512.5px;top:950.92px;font-size:14.2px;line-height:14.2px;color:#111827;font-family:'Liberation Mono',monospace;">&nbsp;&nbsp;"OBAAS-ADMIN":&nbsp;1,</div>
<div class="tx" style="left:1512.5px;top:970.92px;font-size:14.2px;line-height:14.2px;color:#111827;font-family:'Liberation Mono',monospace;">&nbsp;&nbsp;"CHECKS":&nbsp;1,</div>
<div class="tx" style="left:1512.5px;top:990.92px;font-size:14.2px;line-height:14.2px;color:#111827;font-family:'Liberation Mono',monospace;">&nbsp;&nbsp;"ACCOUNT":&nbsp;1,</div>
<div class="tx" style="left:1512.5px;top:1010.92px;font-size:14.2px;line-height:14.2px;color:#111827;font-family:'Liberation Mono',monospace;">&nbsp;&nbsp;"CONDUCTOR":&nbsp;1,</div>
<div class="tx" style="left:1512.5px;top:1030.92px;font-size:14.2px;line-height:14.2px;color:#111827;font-family:'Liberation Mono',monospace;">&nbsp;&nbsp;"TESTRUNNER":&nbsp;1,</div>
<div class="tx" style="left:1512.5px;top:1050.92px;font-size:14.2px;line-height:14.2px;color:#111827;font-family:'Liberation Mono',monospace;">&nbsp;&nbsp;"CREDITSCORE":&nbsp;1,</div>


<div id="scroll"></div><div id="thumb"></div>
<svg class="abs" style="left:0;top:1035px" width="11" height="11" viewBox="0 0 11 11"><path d="M0,0 A11,11 0 0 0 11,11 H0 Z" fill="#1d4a3b"/></svg>
<svg class="abs" style="left:1792px;top:1035px" width="11" height="11" viewBox="0 0 11 11"><path d="M11,0 A11,11 0 0 1 0,11 H11 Z" fill="#1d4a3b"/></svg>
</body></html>
